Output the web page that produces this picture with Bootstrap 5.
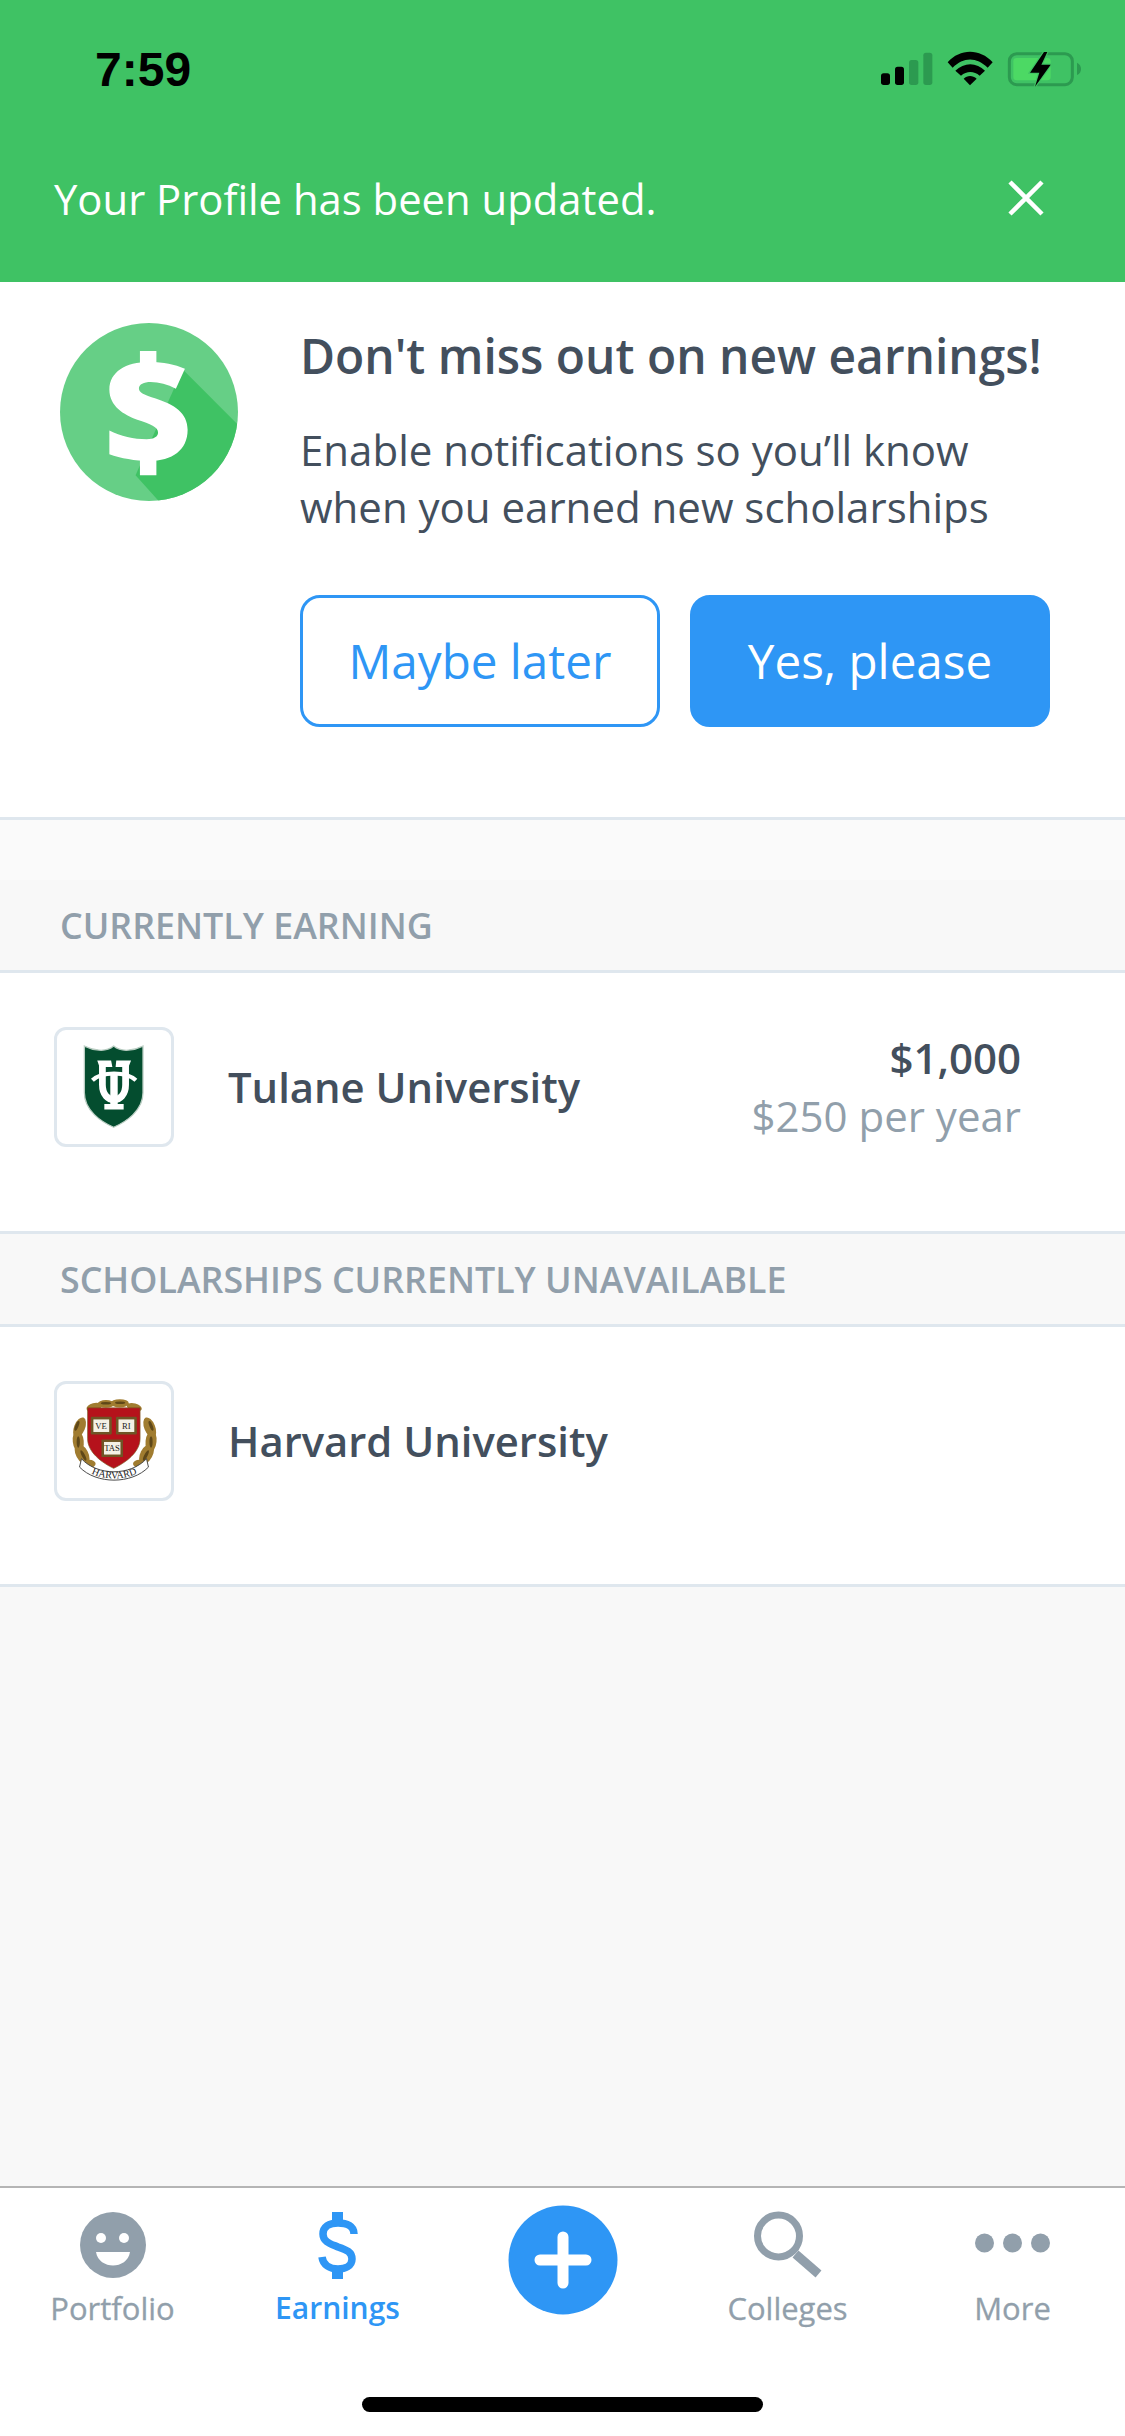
<!DOCTYPE html>
<html lang="en">
<head>
<meta charset="utf-8">
<title>Earnings</title>
<link rel="stylesheet" href="https://cdn.jsdelivr.net/npm/bootstrap@5.3.0/dist/css/bootstrap.min.css">
<style>
html,body{margin:0;width:1125px;height:2436px;overflow:hidden}
body{font-family:"Open Sans","Noto Sans",sans-serif;color:#434f5d;background:#f8f8f8}
.app-shell{width:1125px;height:2436px}
.green-head{background:#3fc264;height:282px}
.status-row{height:135px;padding:52px 25px 0 95px}
.clock{font-family:"Liberation Sans",Arial,sans-serif;font-weight:700;font-size:48px;line-height:35px;color:#000}
.status-svg{width:240px;height:70px;margin-top:-22px}
.toast-row{padding:0 54px;height:147px;padding-bottom:20px}
.toast-text{font-size:41.8px;color:#fff;line-height:56px}
.close-x{width:38px;height:38px;margin-right:26px;margin-top:-2px}
.prompt{background:#fff;height:538px;border-bottom:3px solid #dfe7ee;padding:41px 75px 0 60px}
.coin{width:178px;height:178px;flex:none;margin-right:62px}
.prompt-title{font-size:47.9px;font-weight:600;line-height:60px;margin:3px 0 35px;color:#434f5d;white-space:nowrap}
.prompt-copy{font-size:42px;line-height:57px;margin:0 0 60px;white-space:nowrap}
.choice{width:360px;height:132px;border-radius:20px;font-size:47.6px;border:3px solid #2e96f5;padding:0;line-height:1}
.choice-out,.choice-out:hover{background:#fff;color:#2e96f5}
.choice-fill,.choice-fill:hover{background:#2e96f5;color:#fff}
.section-head{padding-left:60px;background:#f8f8f8;border-bottom:3px solid #dfe7ee;font-size:35.8px;font-weight:600;color:#919fab;line-height:46px}
.head-a{height:153px;padding-top:82px;background:linear-gradient(#fafafa 60px,#f8f8f8 60px)}
.head-b{height:93px;padding-top:22px}
.uni-row{background:#fff;height:261px;border-bottom:3px solid #dfe7ee;padding:54px 67px 0 54px}
.uni-last{height:260px}
.uni-far{padding-right:104px}
.crest{width:120px;height:120px;border:3px solid #dfe7ee;border-radius:12px;flex:none;margin-right:54px;background:#fff}
.uni-name{font-size:41.8px;font-weight:600;line-height:120px}
.amt{font-size:42px;font-weight:600;line-height:58px;margin-top:2px}
.amt-sub{font-size:42px;color:#919fab;line-height:58px}
.fill-gray{background:#f8f8f8}
.tabbar{background:#fff;border-top:2px solid #b5b5b5;height:250px}
.tab-cell{width:225px;height:141px;padding-top:23px}
.tab-icon{height:68px;width:120px;flex:none}
.tab-label{font-size:31px;line-height:40px;color:#919fab;margin-top:9px;-webkit-text-stroke:.3px #919fab}
.tab-on{color:#2e96f5;font-size:30px;font-weight:600;-webkit-text-stroke:0}
.plus-svg{width:110px;height:110px;margin-top:-6px;flex:none}
.home-bar{width:401px;height:15px;border-radius:8px;background:#000;margin:68px auto 0}
</style>
</head>
<body>
<div class="app-shell d-flex flex-column">
  <header class="green-head">
    <div class="status-row d-flex justify-content-between align-items-start">
      <div class="clock">7:59</div>
      <svg class="status-svg" viewBox="0 0 720 210" aria-hidden="true">
        <rect x="63" y="130" width="27" height="35" rx="8" fill="#000"/>
        <rect x="105" y="110" width="27" height="55" rx="8" fill="#000"/>
        <rect x="147" y="90" width="28" height="75" rx="8" fill="#2c9a50"/>
        <rect x="190" y="68" width="27" height="97" rx="8" fill="#2c9a50"/>
        <path d="M263 97C300 55 360 55 398 97L383 113C350 80 310 80 278 113Z" fill="#000"/>
        <path d="M286 122C312 96 350 96 375 122L359 137C342 122 320 122 303 137Z" fill="#000"/>
        <path d="M311 146C322 135 338 135 350 146L330 166Z" fill="#000"/>
        <rect x="448" y="71" width="189" height="93" rx="22" fill="none" stroke="#2c9a50" stroke-width="9"/>
        <rect x="460" y="84" width="112" height="67" rx="10" fill="#4cd964"/>
        <path d="M651 98C660 102 663 110 663 116C663 124 660 131 651 135Z" fill="#2c9a50"/>
        <path d="M552 66L510 128H538L525 170L572 104H544L562 66Z" fill="#000" stroke="#3fc264" stroke-width="7" paint-order="stroke"/>
      </svg>
    </div>
    <div class="toast-row d-flex justify-content-between align-items-center">
      <div class="toast-text">Your Profile has been updated.</div>
      <svg class="close-x" viewBox="0 0 38 38" aria-hidden="true"><path d="M3 3L35 35M35 3L3 35" stroke="#fff" stroke-width="4.5" fill="none"/></svg>
    </div>
  </header>

  <section class="prompt d-flex align-items-start">
    <svg class="coin" viewBox="60 72 530 530" aria-hidden="true">
      <defs><clipPath id="coinclip"><circle cx="325" cy="337" r="265"/></clipPath></defs>
      <circle cx="325" cy="337" r="265" fill="#66cf86"/>
      <path d="M425 210L600 385V620H370L285 525Z" fill="#3fc264" clip-path="url(#coinclip)"/>
      <path d="M298 155H347V200H298ZM298 475H347V525H298Z" fill="#fff"/>
      <path d="M432 208C400 195 370 188 325 188C255 188 207 218 207 270C207 320 250 345 290 360C330 373 352 382 352 398C352 410 340 418 318 418C280 418 240 408 207 392V463C240 475 285 483 325 483C395 483 440 450 440 390C440 340 400 315 345 297C310 285 295 280 295 267C295 255 310 248 330 248C355 248 380 255 405 268Z" fill="#fff"/>
    </svg>
    <div class="flex-grow-1">
      <h1 class="prompt-title">Don't miss out on new earnings!</h1>
      <p class="prompt-copy">Enable notifications so you’ll know<br>when you earned new scholarships</p>
      <div class="d-flex justify-content-between">
        <button type="button" class="btn choice choice-out">Maybe later</button>
        <button type="button" class="btn choice choice-fill">Yes, please</button>
      </div>
    </div>
  </section>

  <div class="section-head head-a">CURRENTLY EARNING</div>
  <div class="uni-row uni-far d-flex align-items-start">
    <div class="crest d-flex align-items-center justify-content-center">
      <svg width="114" height="114" viewBox="0 0 354 354" aria-hidden="true">
        <path d="M85 50C110 62 150 72 176 50C202 72 242 62 267 50V195C267 250 215 285 176 302C137 285 85 250 85 195Z" fill="#044d2f" stroke="#b9cdc2" stroke-width="4"/>
        <g fill="none" stroke="#fff">
          <path d="M110 156C140 128 214 128 245 156" stroke-width="13"/>
          <path d="M141 110V170C141 232 213 232 213 170V110" stroke-width="21"/>
          <path d="M177 134V240" stroke-width="23"/>
        </g>
        <path d="M125 95H168L172 115H132ZM184 95H230L222 115H182ZM147 230H207V247H147Z" fill="#fff"/>
      </svg>
    </div>
    <div class="uni-name flex-grow-1">Tulane University</div>
    <div class="text-end">
      <div class="amt">$1,000</div>
      <div class="amt-sub">$250 per year</div>
    </div>
  </div>

  <div class="section-head head-b">SCHOLARSHIPS CURRENTLY UNAVAILABLE</div>
  <div class="uni-row uni-last d-flex align-items-start">
    <div class="crest d-flex align-items-center justify-content-center">
      <svg width="114" height="114" viewBox="0 0 354 354" aria-hidden="true">
        <g fill="#a07c30">
          <ellipse cx="70" cy="135" rx="17" ry="33" transform="rotate(22 70 135)"/>
          <ellipse cx="66" cy="178" rx="17" ry="34" transform="rotate(-6 66 178)"/>
          <ellipse cx="78" cy="218" rx="19" ry="34" transform="rotate(-28 78 218)"/>
          <ellipse cx="100" cy="248" rx="20" ry="13"/>
          <ellipse cx="288" cy="135" rx="17" ry="33" transform="rotate(-22 288 135)"/>
          <ellipse cx="292" cy="178" rx="17" ry="34" transform="rotate(6 292 178)"/>
          <ellipse cx="278" cy="218" rx="19" ry="34" transform="rotate(28 278 218)"/>
          <ellipse cx="256" cy="248" rx="20" ry="13"/>
          <ellipse cx="115" cy="72" rx="24" ry="13" transform="rotate(-15 115 72)"/>
          <ellipse cx="152" cy="62" rx="26" ry="12"/>
          <ellipse cx="195" cy="60" rx="28" ry="13"/>
          <ellipse cx="240" cy="72" rx="24" ry="12" transform="rotate(15 240 72)"/>
        </g>
        <g fill="#5e4718">
          <ellipse cx="62" cy="130" rx="5" ry="16" transform="rotate(22 62 130)"/>
          <ellipse cx="66" cy="180" rx="5" ry="18"/>
          <ellipse cx="82" cy="222" rx="5" ry="18" transform="rotate(-28 82 222)"/>
          <ellipse cx="292" cy="130" rx="5" ry="16" transform="rotate(-22 292 130)"/>
          <ellipse cx="292" cy="180" rx="5" ry="18"/>
          <ellipse cx="276" cy="222" rx="5" ry="18" transform="rotate(28 276 222)"/>
          <ellipse cx="152" cy="60" rx="16" ry="4"/>
          <ellipse cx="196" cy="58" rx="16" ry="4"/>
        </g>
        <path d="M95 74H258V170C258 212 212 245 176 262C140 245 95 212 95 170Z" fill="#b5121b" stroke="#7a5c22" stroke-width="2"/>
        <g fill="#6f5526">
          <rect x="105" y="102" width="65" height="55" rx="3"/>
          <rect x="183" y="102" width="65" height="55" rx="3"/>
          <rect x="138" y="172" width="67" height="55" rx="3"/>
        </g>
        <g fill="#f4f1e6">
          <rect x="113" y="110" width="49" height="39"/>
          <rect x="191" y="110" width="49" height="39"/>
          <rect x="146" y="180" width="51" height="39"/>
        </g>
        <g font-family="'Liberation Serif',serif" font-size="27" fill="#222" text-anchor="middle">
          <text x="137" y="139">VE</text>
          <text x="215" y="139">RI</text>
          <text x="171" y="209">TAS</text>
        </g>
        <path d="M76 232C125 286 228 286 278 232L284 258C232 312 122 312 70 258Z" fill="#fff" stroke="#444" stroke-width="3"/>
        <defs><path id="ribbonline" d="M78 258C125 305 230 305 278 258"/></defs>
        <text font-family="'Liberation Serif',serif" font-size="31" fill="#222" text-anchor="middle"><textPath href="#ribbonline" startOffset="50%">HARVARD</textPath></text>
      </svg>
    </div>
    <div class="uni-name flex-grow-1">Harvard University</div>
  </div>

  <div class="fill-gray flex-grow-1"></div>

  <nav class="tabbar">
    <div class="d-flex">
      <div class="tab-cell d-flex flex-column align-items-center">
        <svg class="tab-icon" viewBox="0 0 120 68" aria-hidden="true">
          <circle cx="60" cy="34" r="33" fill="#919fab"/>
          <circle cx="48" cy="27" r="5" fill="#fff"/><circle cx="71" cy="27" r="5" fill="#fff"/>
          <path d="M43 41H77C74 59 46 59 43 41Z" fill="#fff"/>
        </svg>
        <div class="tab-label">Portfolio</div>
      </div>
      <div class="tab-cell d-flex flex-column align-items-center">
        <svg class="tab-icon" viewBox="0 0 120 68" aria-hidden="true">
          <path d="M54 1H65V12H54ZM54 58H65V68H54Z" fill="#2e96f5"/>
          <path d="M76 23C76 15 69 12 60 12C51 12 45 16 45 23C45 31 53 33 60 36C69 39 74 41 74 48C74 55 67 58 60 58C52 58 45 54 44 46" fill="none" stroke="#2e96f5" stroke-width="7.5"/>
        </svg>
        <div class="tab-label tab-on">Earnings</div>
      </div>
      <div class="tab-cell d-flex flex-column align-items-center">
        <svg class="plus-svg" viewBox="0 0 110 110" aria-hidden="true">
          <circle cx="55" cy="55" r="54.5" fill="#2e96f5"/>
          <path d="M55 32V78M32 55H78" stroke="#fff" stroke-width="11" stroke-linecap="round" fill="none"/>
        </svg>
      </div>
      <div class="tab-cell d-flex flex-column align-items-center">
        <svg class="tab-icon" viewBox="0 0 120 68" aria-hidden="true">
          <circle cx="50.5" cy="25" r="21" fill="none" stroke="#919fab" stroke-width="7"/>
          <path d="M67.5 43L90.5 63" stroke="#919fab" stroke-width="9" fill="none"/>
        </svg>
        <div class="tab-label">Colleges</div>
      </div>
      <div class="tab-cell d-flex flex-column align-items-center">
        <svg class="tab-icon" viewBox="0 0 120 68" aria-hidden="true">
          <circle cx="31.5" cy="32" r="9.5" fill="#919fab"/><circle cx="59.5" cy="32" r="9.5" fill="#919fab"/><circle cx="87.5" cy="32" r="9.5" fill="#919fab"/>
        </svg>
        <div class="tab-label">More</div>
      </div>
    </div>
    <div class="home-bar"></div>
  </nav>
</div>
<script src="https://cdn.jsdelivr.net/npm/bootstrap@5.3.0/dist/js/bootstrap.bundle.min.js"></script>
</body>
</html>
